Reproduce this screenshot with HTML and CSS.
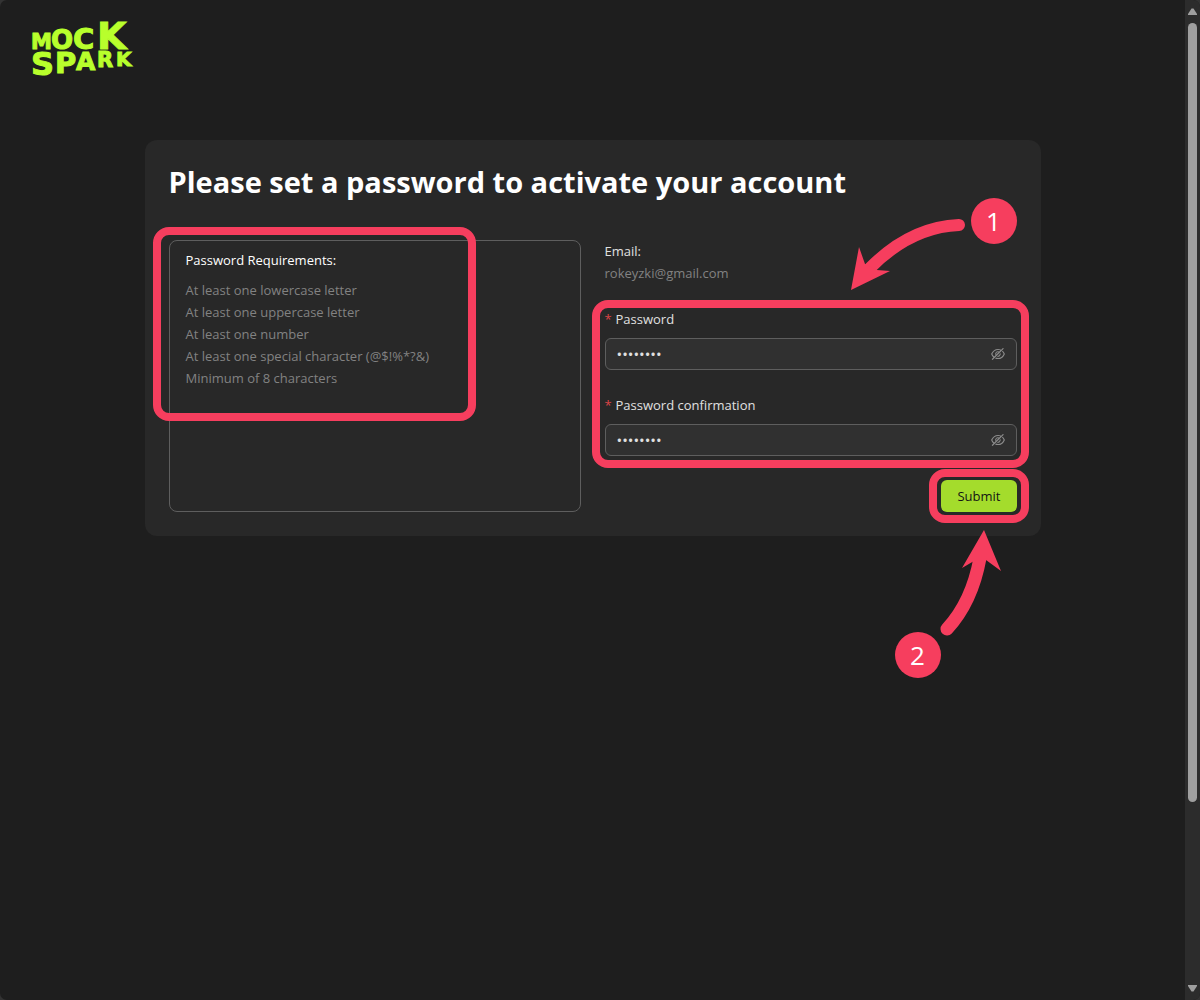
FILE: index.html
```html
<!DOCTYPE html>
<html lang="en">
<head>
<meta charset="utf-8">
<meta name="viewport" content="width=device-width, initial-scale=1">
<title>MockSpark - Activate account</title>
<link rel="stylesheet" href="styles.css">
</head>
<body>
<div class="window">
  <div class="page">
    <header class="header">
      <svg class="logo" viewBox="0 0 106 60" role="img" aria-label="Mock Spark">
        <text class="logo-text" y="30"><tspan x="-1" font-size="21">M</tspan><tspan x="19" font-size="26">O</tspan><tspan x="41" font-size="29">C</tspan><tspan x="65" font-size="38">K</tspan></text>
        <text class="logo-text"><tspan x="-1" y="56" font-size="32">S</tspan><tspan x="23" y="54" font-size="29">P</tspan><tspan x="44" y="51" font-size="25">A</tspan><tspan x="65" y="48" font-size="21">R</tspan><tspan x="84" y="47" font-size="20">K</tspan></text>
      </svg>
    </header>
    <main class="main">
      <section class="card">
        <h1 class="title">Please set a password to activate your account</h1>
        <div class="columns">
          <div class="requirements">
            <h2 class="requirements-title">Password Requirements:</h2>
            <ul class="requirements-list">
              <li>At least one lowercase letter</li>
              <li>At least one uppercase letter</li>
              <li>At least one number</li>
              <li>At least one special character (@$!%*?&amp;)</li>
              <li>Minimum of 8 characters</li>
            </ul>
            <div class="highlight highlight-rules"></div>
          </div>
          <form class="form">
            <div>
              <div class="label">Email:</div>
              <div class="email">rokeyzki@gmail.com</div>
            </div>
            <div class="fields">
              <div class="field">
                <label class="label" for="password"><span class="required">*</span>Password</label>
                <div class="control">
                  <input class="input" id="password" type="password" value="password">
                  <button class="toggle" type="button" aria-label="Show password"><svg class="eye" viewBox="64 64 896 896"><path d="M942.2 486.2Q889.47 375.11 816.7 305l-50.88 50.88C807.31 395.53 843.45 447.4 874.7 512 791.5 684.2 673.4 766 512 766q-72.67 0-133.87-22.38L323 798.75Q408 838 512 838q288.3 0 430.2-300.3a60.29 60.29 0 000-51.5zm-63.57-320.64L836 122.88a8 8 0 00-11.32 0L715.31 232.2Q624.86 186 512 186q-288.3 0-430.2 300.3a60.3 60.3 0 000 51.5q56.69 119.4 136.5 191.41L112.48 835a8 8 0 000 11.31L155.17 889a8 8 0 0011.31 0l712.15-712.12a8 8 0 000-11.32zM149.3 512C232.6 339.8 350.7 258 512 258c54.54 0 104.13 9.36 149.12 28.39l-70.3 70.3a176 176 0 00-238.13 238.13l-83.42 83.42C223.1 637.49 183.3 582.28 149.3 512zm246.7 0a112.11 112.11 0 01146.2-106.69L401.31 546.2A112 112 0 01396 512z"/><path d="M508 624c-3.46 0-6.87-.16-10.25-.47l-52.82 52.82a176.09 176.09 0 00227.42-227.42l-52.82 52.82c.31 3.38.47 6.79.47 10.25a111.94 111.94 0 01-112 112z"/></svg></button>
                </div>
              </div>
              <div class="field">
                <label class="label" for="confirmation"><span class="required">*</span>Password confirmation</label>
                <div class="control">
                  <input class="input" id="confirmation" type="password" value="password">
                  <button class="toggle" type="button" aria-label="Show password"><svg class="eye" viewBox="64 64 896 896"><path d="M942.2 486.2Q889.47 375.11 816.7 305l-50.88 50.88C807.31 395.53 843.45 447.4 874.7 512 791.5 684.2 673.4 766 512 766q-72.67 0-133.87-22.38L323 798.75Q408 838 512 838q288.3 0 430.2-300.3a60.29 60.29 0 000-51.5zm-63.57-320.64L836 122.88a8 8 0 00-11.32 0L715.31 232.2Q624.86 186 512 186q-288.3 0-430.2 300.3a60.3 60.3 0 000 51.5q56.69 119.4 136.5 191.41L112.48 835a8 8 0 000 11.31L155.17 889a8 8 0 0011.31 0l712.15-712.12a8 8 0 000-11.32zM149.3 512C232.6 339.8 350.7 258 512 258c54.54 0 104.13 9.36 149.12 28.39l-70.3 70.3a176 176 0 00-238.13 238.13l-83.42 83.42C223.1 637.49 183.3 582.28 149.3 512zm246.7 0a112.11 112.11 0 01146.2-106.69L401.31 546.2A112 112 0 01396 512z"/><path d="M508 624c-3.46 0-6.87-.16-10.25-.47l-52.82 52.82a176.09 176.09 0 00227.42-227.42l-52.82 52.82c.31 3.38.47 6.79.47 10.25a111.94 111.94 0 01-112 112z"/></svg></button>
                </div>
              </div>
              <div class="highlight highlight-fields"></div>
            </div>
            <div class="actions">
              <button class="submit" type="submit">Submit</button>
              <div class="highlight highlight-submit"></div>
            </div>
          </form>
        </div>
        <div class="step step-one">1</div>
        <svg class="arrow arrow-one" viewBox="0 0 120 80"><path class="arrow-shaft" d="M109 10Q60 12 19 54"/><path class="arrow-head" d="M1 75L9 32L15 49L27 55L40 56Z"/></svg>
        <div class="step step-two">2</div>
        <svg class="arrow arrow-two" viewBox="0 0 70 110"><path class="arrow-shaft" d="M12 99Q37 72 45 28"/><path class="arrow-head" d="M49 0L66 41L51 30L39 31L27 38Z"/></svg>
      </section>
    </main>
  </div>
  <div class="scrollbar" aria-hidden="true">
    <svg class="scroll-arrow" viewBox="0 0 9 7"><path d="M3.5 0.5H5.5L9 6V7H0V6Z"/></svg>
    <div class="scroll-track"><div class="scroll-thumb"></div></div>
    <svg class="scroll-arrow" viewBox="0 0 9 7"><path d="M3.5 6.5H5.5L9 1V0H0V1Z"/></svg>
  </div>
</div>
</body>
</html>
```
FILE: styles.css
```css
* { box-sizing: border-box; }

html { background: #333; }

body {
  margin: 0;
  font-family: "Open Sans", "Noto Sans", sans-serif;
  font-size: 13px;
  line-height: 22px;
  color: #e0e0e0;
}

.window {
  display: flex;
  min-height: 100vh;
  overflow: hidden;
  border-radius: 7px;
  background: #1e1e1e;
}

.page { flex: 1; min-width: 0; }

.header { padding: 19px 32px 0; }

.logo {
  display: block;
  width: 106px;
  height: 60px;
  overflow: visible;
}

.logo-text {
  font-family: "DejaVu Sans", sans-serif;
  font-weight: 700;
  fill: #b8ff2c;
  stroke: #b8ff2c;
  stroke-width: 1;
}

.main { padding: 61px 24px 24px; }

.card {
  position: relative;
  max-width: 896px;
  margin: 0 auto;
  padding: 24px;
  border-radius: 12px;
  background: #282828;
}

.title {
  margin: 0 0 40px;
  font-size: 29px;
  line-height: 36px;
  font-weight: 700;
  color: #fff;
}

.columns {
  display: grid;
  grid-template-columns: 1fr 1fr;
  gap: 24px;
}

.requirements {
  position: relative;
  padding: 8px 16px;
  border: 1px solid #5e5e5e;
  border-radius: 8px;
}

.requirements-title {
  margin: 0 0 8px;
  font-size: 13px;
  line-height: 22px;
  font-weight: 400;
  color: #fff;
}

.requirements-list {
  margin: 0;
  padding: 0;
  list-style: none;
  color: #828282;
}

.form {
  display: flex;
  flex-direction: column;
  gap: 24px;
}

.email { color: #828282; }

.fields {
  position: relative;
  display: flex;
  flex-direction: column;
  gap: 24px;
}

.field {
  display: flex;
  flex-direction: column;
  gap: 8px;
}

.required {
  display: inline-block;
  width: 11px;
  color: #dc4446;
}

.control {
  display: flex;
  align-items: center;
  height: 32px;
  padding: 0 11px;
  border: 1px solid #5e5e5e;
  border-radius: 6px;
  background: #303030;
}

.input {
  flex: 1;
  min-width: 0;
  padding: 0;
  border: 0;
  outline: 0;
  background: none;
  font: inherit;
  font-size: 15px;
  color: #e0e0e0;
}

.toggle {
  display: flex;
  padding: 0;
  border: 0;
  background: none;
}

.eye {
  width: 14px;
  height: 14px;
  fill: #8c8c8c;
}

.actions {
  position: relative;
  align-self: flex-end;
}

.submit {
  display: block;
  height: 32px;
  padding: 0 16px;
  border: 0;
  border-radius: 6px;
  background: #a4dc2c;
  font: inherit;
  color: #141414;
}

.highlight {
  position: absolute;
  border: 8px solid #f63e5e;
  border-radius: 16px;
  pointer-events: none;
}

.highlight-rules {
  top: -14px;
  left: -17px;
  width: 323px;
  height: 194px;
}

.highlight-fields { inset: -8px -12px -12px -13px; }

.highlight-submit { inset: -11px -12px; }

.step {
  position: absolute;
  width: 46px;
  height: 46px;
  border-radius: 50%;
  background: #f63e5e;
  font-size: 26px;
  line-height: 46px;
  text-align: center;
  color: #fff;
}

.step-one { top: 58px; right: 24px; }
.step-two { top: 492px; right: 100px; }

.arrow { position: absolute; }

.arrow-one { top: 75px; right: 71px; width: 120px; height: 80px; }
.arrow-two { top: 390px; right: 36px; width: 70px; height: 110px; }

.arrow-shaft {
  fill: none;
  stroke: #f63e5e;
  stroke-width: 12;
  stroke-linecap: round;
}

.arrow-head { fill: #f63e5e; }

.arrow-two .arrow-shaft { stroke-width: 13; }

.scrollbar {
  display: flex;
  flex-direction: column;
  align-items: center;
  width: 15px;
  padding: 8px 0;
  background: #2c2c2c;
}

.scroll-arrow {
  width: 9px;
  height: 7px;
  fill: #9f9f9f;
}

.scroll-track {
  flex: 1;
  width: 9px;
  padding: 8px 0;
}

.scroll-thumb {
  height: calc(82% - 3px);
  border-radius: 5px;
  background: #9f9f9f;
}
```
